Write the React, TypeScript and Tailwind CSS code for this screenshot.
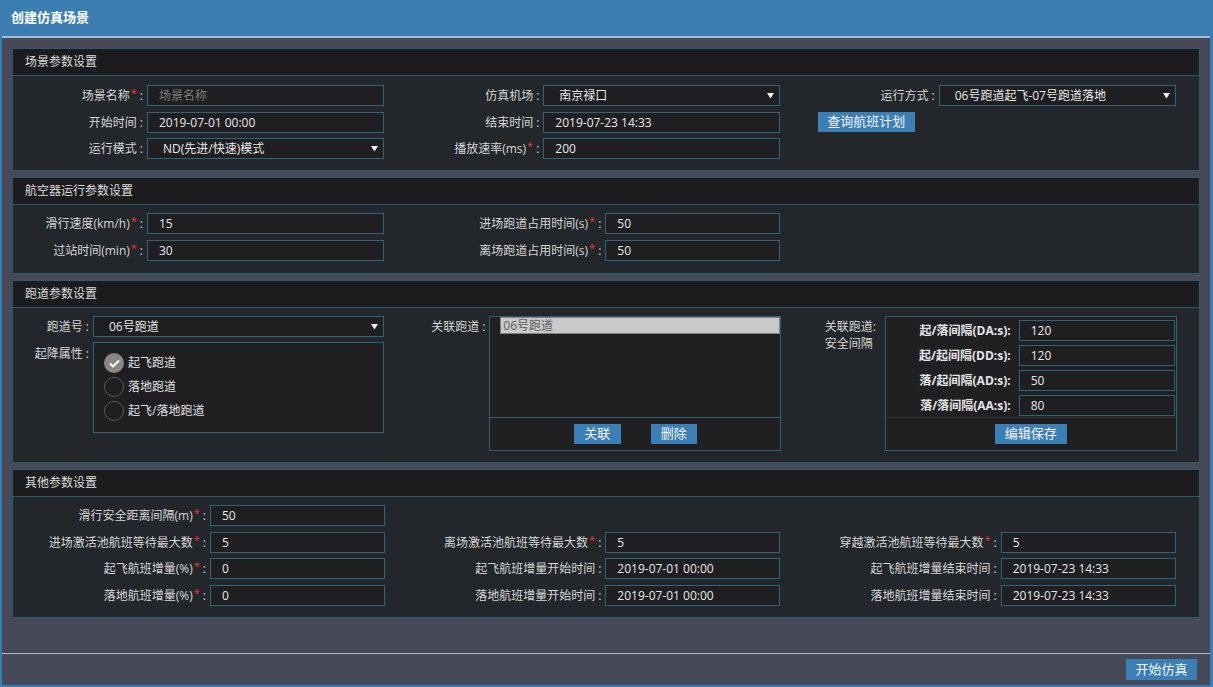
import React from 'react';

function Star() {
  return <span className="relative -top-[3px] ml-[1px] text-[11px] text-[#e53935]">*</span>;
}

function Label({
  text,
  required,
  width,
}: {
  text: string;
  required?: boolean;
  width: string;
}) {
  return (
    <div
      className={`${width} shrink-0 whitespace-nowrap text-right text-[12px] leading-[21px] text-[#d6d6d6]`}
    >
      {text}
      {required && <Star />}
      <span className="ml-[3px]">:</span>
    </div>
  );
}

function TextInput({
  value,
  placeholder,
  width,
}: {
  value?: string;
  placeholder?: string;
  width: string;
}) {
  return (
    <input
      readOnly
      value={value ?? ''}
      placeholder={placeholder}
      className={`${width} h-[21px] shrink-0 border border-[#2c6577] bg-[#1f1f21] pl-[11px] text-[12px] text-[#e8e8e8] outline-none placeholder:text-[#7d7d7d]`}
    />
  );
}

function Select({ value, width }: { value: string; width: string }) {
  return (
    <div
      className={`${width} flex h-[21px] shrink-0 items-center justify-between border border-[#2c6577] bg-[#1f1f21] pl-[15px] pr-[5px] text-[12px] text-[#e8e8e8]`}
    >
      <span>{value}</span>
      <svg width="7" height="7" viewBox="0 0 7 7">
        <path d="M0 1h7L3.5 6.5z" fill="#f0f0f0" />
      </svg>
    </div>
  );
}

function Button({ children, className = '' }: { children: React.ReactNode; className?: string }) {
  return (
    <button
      type="button"
      className={`flex h-[20px] items-center justify-center bg-[#3b7fb5] text-[13px] text-[#f2f2f2] ${className}`}
    >
      {children}
    </button>
  );
}

function Panel({
  title,
  bodyClass,
  children,
}: {
  title: string;
  bodyClass: string;
  children: React.ReactNode;
}) {
  return (
    <section className="border border-[#2b5a6a] bg-[#23262b]">
      <div className="h-[27px] border-b border-[#2b5a6a] bg-[#1c1c1e] pl-[12px] text-[12px] leading-[26px] text-[#dcdcdc]">
        {title}
      </div>
      <div className={bodyClass}>{children}</div>
    </section>
  );
}

function Field({ children }: { children: React.ReactNode }) {
  return <div className="flex items-center gap-[4px]">{children}</div>;
}

// narrow label / wide input
function FieldA({ label, required, value, placeholder }: { label: string; required?: boolean; value?: string; placeholder?: string }) {
  return (
    <Field>
      <Label text={label} required={required} width="w-[130px]" />
      <TextInput value={value} placeholder={placeholder} width="w-[237px]" />
    </Field>
  );
}

// wide label / narrow input
function FieldB({ label, required, value }: { label: string; required?: boolean; value: string }) {
  return (
    <Field>
      <Label text={label} required={required} width="w-[193px]" />
      <TextInput value={value} width="w-[175px]" />
    </Field>
  );
}

function Radio({ checked, label }: { checked?: boolean; label: string }) {
  return (
    <div className="flex h-[20px] items-center gap-[4px]">
      {checked ? (
        <span className="flex h-[20px] w-[20px] items-center justify-center rounded-full bg-[#8b8784]">
          <svg width="11" height="9" viewBox="0 0 11 9">
            <path d="M1 4.5l3 3L10 1.5" fill="none" stroke="#fff" strokeWidth="2" />
          </svg>
        </span>
      ) : (
        <span className="h-[20px] w-[20px] rounded-full border-[1.5px] border-[#5a5a5a]" />
      )}
      <span className="text-[12px] text-[#e0e0e0]">{label}</span>
    </div>
  );
}

const INTERVALS = [
  { label: '起/落间隔(DA:s)', value: '120' },
  { label: '起/起间隔(DD:s)', value: '120' },
  { label: '落/起间隔(AD:s)', value: '50' },
  { label: '落/落间隔(AA:s)', value: '80' },
];

export default function App() {
  return (
    <div className="flex h-[687px] w-full flex-col bg-[#3b7db1] font-['Open_Sans','Noto_Sans_CJK_SC',sans-serif]">
      <div className="flex h-[36px] shrink-0 items-center pl-[11px] text-[13px] font-bold text-white">
        创建仿真场景
      </div>
      <div className="ml-[2px] mr-[3px] mb-[2px] flex flex-1 flex-col bg-[#464958]">
        <div className="h-[2px] bg-[#a9bccd]" />

        <div className="flex flex-1 flex-col gap-[6px] px-[10px] pt-[10px]">
          <Panel title="场景参数设置" bodyClass="grid grid-cols-3 gap-y-[5.5px] pt-[9px] pb-[11px]">
            <FieldA label="场景名称" required placeholder="场景名称" />
            <Field>
              <Label text="仿真机场" width="w-[131px]" />
              <Select value="南京禄口" width="w-[237px]" />
            </Field>
            <Field>
              <Label text="运行方式" width="w-[131px]" />
              <Select value="06号跑道起飞-07号跑道落地" width="w-[237px]" />
            </Field>

            <FieldA label="开始时间" value="2019-07-01 00:00" />
            <Field>
              <Label text="结束时间" width="w-[131px]" />
              <TextInput value="2019-07-23 14:33" width="w-[237px]" />
            </Field>
            <div className="flex items-center pl-[14px]">
              <Button className="w-[97px]">查询航班计划</Button>
            </div>

            <Field>
              <Label text="运行模式" width="w-[130px]" />
              <Select value="ND(先进/快速)模式" width="w-[237px]" />
            </Field>
            <Field>
              <Label text="播放速率(ms)" required width="w-[131px]" />
              <TextInput value="200" width="w-[237px]" />
            </Field>
            <div />
          </Panel>

          <Panel title="航空器运行参数设置" bodyClass="grid grid-cols-3 gap-y-[6px] pt-[8px] pb-[12px]">
            <FieldA label="滑行速度(km/h)" required value="15" />
            <FieldB label="进场跑道占用时间(s)" required value="50" />
            <div />
            <FieldA label="过站时间(min)" required value="30" />
            <FieldB label="离场跑道占用时间(s)" required value="50" />
            <div />
          </Panel>

          <Panel title="跑道参数设置" bodyClass="grid grid-cols-3 items-start pt-[8px] pb-[11px]">
            <div className="flex flex-col gap-[5px]">
              <Field>
                <Label text="跑道号" width="w-[76px]" />
                <Select value="06号跑道" width="w-[291px]" />
              </Field>
              <div className="flex items-start gap-[4px]">
                <div className="pt-[1px]">
                  <Label text="起降属性" width="w-[76px]" />
                </div>
                <div className="flex h-[91px] w-[291px] flex-col gap-[4px] border border-[#2c6577] bg-[#1f1f21] pl-[10px] pt-[10px]">
                  <Radio checked label="起飞跑道" />
                  <Radio label="落地跑道" />
                  <Radio label="起飞/落地跑道" />
                </div>
              </div>
            </div>

            <div className="flex items-start gap-[4px]">
              <Label text="关联跑道" width="w-[77px]" />
              <div className="flex h-[135px] w-[292px] flex-col border border-[#2e5f70] bg-[#202022]">
                <div className="h-[100px] pl-[10px]">
                  <div className="h-[17px] border border-[#808080] bg-[#c9c9c9] pl-[2px] text-[12px] leading-[15px] text-[#5c5c5c]">
                    06号跑道
                  </div>
                </div>
                <div className="flex h-[33px] items-center justify-center gap-[30px] border-t border-[#2e5f70]">
                  <Button className="h-[19px] w-[47px]">关联</Button>
                  <Button className="h-[19px] w-[46px]">删除</Button>
                </div>
              </div>
            </div>

            <div className="flex items-start gap-[4px]">
              <div className="w-[77px] shrink-0 pl-[21px] pt-[2px] text-[12px] leading-[17px] text-[#d6d6d6]">
                关联跑道:
                <br />
                安全间隔
              </div>
              <div className="flex h-[135px] w-[292px] flex-col border border-[#2e5f70] bg-[#202022]">
                <div className="flex h-[100px] flex-col gap-[4px] pt-[3px]">
                  {INTERVALS.map((row) => (
                    <div key={row.label} className="flex items-center gap-[8px]">
                      <div className="w-[125px] shrink-0 whitespace-nowrap text-right text-[12px] font-bold text-[#e6e6e6]">
                        {row.label}:
                      </div>
                      <TextInput value={row.value} width="w-[156px]" />
                    </div>
                  ))}
                </div>
                <div className="flex h-[33px] items-center justify-center border-t border-[#30343a]">
                  <Button className="w-[72px]">编辑保存</Button>
                </div>
              </div>
            </div>
          </Panel>

          <Panel title="其他参数设置" bodyClass="grid grid-cols-3 gap-y-[5.5px] pt-[8px] pb-[11px]">
            <FieldB label="滑行安全距离间隔(m)" required value="50" />
            <div />
            <div />

            <FieldB label="进场激活池航班等待最大数" required value="5" />
            <FieldB label="离场激活池航班等待最大数" required value="5" />
            <FieldB label="穿越激活池航班等待最大数" required value="5" />

            <FieldB label="起飞航班增量(%)" required value="0" />
            <FieldB label="起飞航班增量开始时间" value="2019-07-01 00:00" />
            <FieldB label="起飞航班增量结束时间" value="2019-07-23 14:33" />

            <FieldB label="落地航班增量(%)" required value="0" />
            <FieldB label="落地航班增量开始时间" value="2019-07-01 00:00" />
            <FieldB label="落地航班增量结束时间" value="2019-07-23 14:33" />
          </Panel>
        </div>

        <div className="h-[1px] bg-[#b8bbc2]" />
        <div className="flex h-[31px] shrink-0 items-center justify-end pr-[13px]">
          <Button className="h-[21px] w-[71px]">开始仿真</Button>
        </div>
      </div>
    </div>
  );
}
